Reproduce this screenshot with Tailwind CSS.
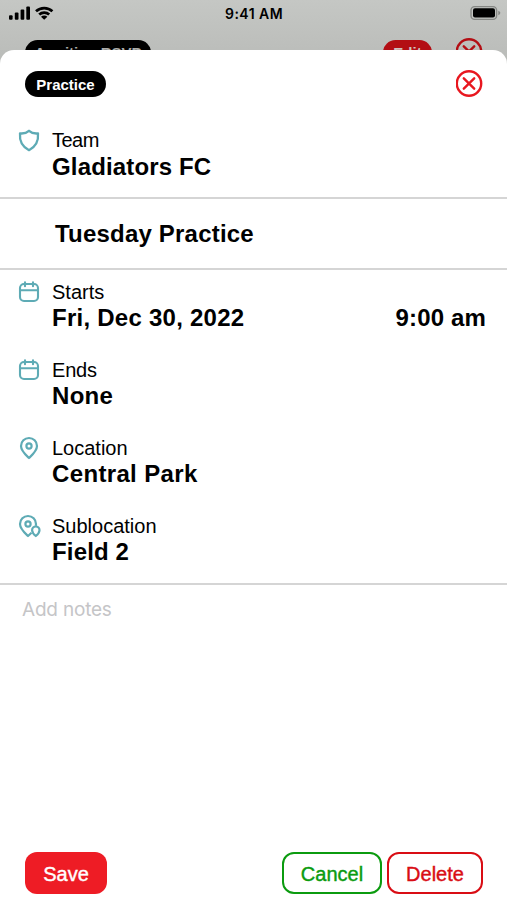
<!DOCTYPE html>
<html lang="en">
<head>
<meta charset="utf-8">
<meta name="viewport" content="width=device-width">
<title>Practice</title>
<script src="https://cdn.jsdelivr.net/npm/@tailwindcss/browser@4"></script>
</head>
<body class="font-['Liberation_Sans',Arial,sans-serif] text-black">
<div class="h-[900px] w-[507px] overflow-hidden bg-linear-to-b from-[#c5c7c4] from-0% to-[#b8bab7] to-[70px] flex flex-col">
  <header class="relative h-[50px] shrink-0 overflow-hidden">
    <div class="flex h-[28px] items-center justify-between pl-2 pr-[6px]">
      <svg class="w-[48px] h-[28px]" viewBox="8 0 48 28">
        <g><rect x="9" y="15.3" width="3.6" height="4.4" rx="1"/><rect x="14.8" y="12.4" width="3.7" height="7.3" rx="1"/><rect x="20.6" y="9.4" width="3.7" height="10.3" rx="1"/><rect x="26.3" y="6.5" width="3.7" height="13.2" rx="1"/></g>
        <g fill="none" stroke="#000" stroke-width="2.7"><path d="M36 11.3a12 12 0 0 1 16.4 0"/><path d="M39.2 14.6a7.3 7.3 0 0 1 10 0"/></g>
        <path d="M41 16.7a4.6 4.6 0 0 1 6.4 0L44.2 19.8z"/>
      </svg>
      <svg class="w-[32px] h-[28px]" viewBox="469 0 32 28">
        <rect x="471" y="6.6" width="25.6" height="12.8" rx="3.6" fill="none" stroke="#858784" stroke-width="1.4"/>
        <rect x="473" y="8.3" width="22" height="9.3" rx="2"/>
        <path d="M498.3 10.8v4.4c2.7-.9 2.7-3.5 0-4.4z" fill="#858784"/>
      </svg>
    </div>
    <div class="absolute left-[225px] top-[4px] text-[14px] leading-[20px] font-semibold tracking-[0.45px] whitespace-nowrap font-[Inter,sans-serif]">9:41 AM</div>
    <div class="flex items-start pl-[25px] pr-6 pt-[10px]">
      <div class="mt-[2px] h-[25px] w-[126px] shrink-0 rounded-full bg-black text-center text-[15px] leading-[25px] font-bold text-[#aaaba9] whitespace-nowrap">Awaiting RSVP</div>
      <div class="mt-[2px] ml-[232px] h-[25px] w-[49px] shrink-0 rounded-full bg-[#b30e14] text-center text-[15px] leading-[25px] font-bold text-[#cfc3c0]">Edit</div>
      <svg class="ml-[24px] size-7 shrink-0" viewBox="0 0 28 28" fill="none" stroke="#b30e14" stroke-width="2.4" stroke-linecap="round"><circle cx="13" cy="13.5" r="12.2"/><path d="M7.8 8.3l10.4 10.4m0-10.4L7.8 18.7"/></svg>
    </div>
  </header>
  <main class="flex flex-1 flex-col rounded-t-[14px] bg-white">
    <div class="flex h-[77px] shrink-0 items-start pl-[25px] pr-[23px] pt-[19px] justify-between">
      <div class="mt-[2px] h-[26px] w-[81px] rounded-full bg-black text-center text-[15px] leading-[27px] font-bold text-white">Practice</div>
      <svg class="size-7" viewBox="0 0 28 28" fill="none" stroke="#e8171f" stroke-width="2.4" stroke-linecap="round"><circle cx="13" cy="14.5" r="12.2"/><path d="M7.8 9.3l10.4 10.4m0-10.4L7.8 19.7"/></svg>
    </div>
    <section class="flex h-[71.5px] shrink-0 items-start border-b-2 border-[#d5d5d5] pl-[17px]">
      <svg class="mt-[2px] mr-[11px] size-6 shrink-0" viewBox="0 0 24 24" fill="none" stroke="#5eabb5" stroke-width="2.3" stroke-linejoin="round"><path d="M12 1.8C9.8 3.8 6.6 4.8 3 4.4C2.4 11 5 17.6 12 21.2C19 17.6 21.6 11 21 4.4C17.4 4.8 14.2 3.8 12 1.8z"/></svg>
      <div><div class="text-[20px] leading-[26px] tracking-[-0.5px]">Team</div><div class="text-[24px] leading-[28px] font-bold tracking-[0.15px]">Gladiators FC</div></div>
    </section>
    <section class="h-[71.5px] shrink-0 border-b-2 border-[#d5d5d5] pl-[55px] pt-[21px] text-[24px] leading-[28px] font-bold tracking-[0.2px]">Tuesday Practice</section>
    <section class="flex h-[315px] shrink-0 flex-col gap-[26px] border-b-2 border-[#d5d5d5] pl-[17px] pt-[9px]">
      <div class="flex items-start">
        <svg class="mt-px mr-[11px] size-6 shrink-0" viewBox="0 0 24 24" fill="none" stroke="#5eabb5" stroke-width="2.1" stroke-linecap="round"><rect x="3" y="4" width="18" height="17" rx="4"/><path d="M3 10.3h18M8 2.2v4M16 2.2v4"/></svg>
        <div><div class="text-[20px] leading-[26px]">Starts</div><div class="text-[24px] leading-[26px] font-bold tracking-[0.25px]">Fri, Dec 30, 2022</div></div>
        <div class="ml-auto mr-[21px] mt-[26px] text-[24px] leading-[26px] font-bold tracking-[0.15px]">9:00 am</div>
      </div>
      <div class="flex items-start">
        <svg class="mt-px mr-[11px] size-6 shrink-0" viewBox="0 0 24 24" fill="none" stroke="#5eabb5" stroke-width="2.1" stroke-linecap="round"><rect x="3" y="4" width="18" height="17" rx="4"/><path d="M3 10.3h18M8 2.2v4M16 2.2v4"/></svg>
        <div><div class="text-[20px] leading-[26px] tracking-[-0.2px]">Ends</div><div class="text-[24px] leading-[26px] font-bold tracking-[0.3px]">None</div></div>
      </div>
      <div class="flex items-start">
        <svg class="mt-px mr-[11px] size-6 shrink-0" viewBox="0 0 24 24" fill="none" stroke="#5eabb5" stroke-width="2.2" stroke-linejoin="round"><path d="M12 22C9 19.1 4 14.9 4 10a8 8 0 0 1 16 0C20 14.9 15 19.1 12 22z"/><circle cx="12" cy="10" r="2.6"/></svg>
        <div><div class="text-[20px] leading-[26px]">Location</div><div class="text-[24px] leading-[26px] font-bold tracking-[0.35px]">Central Park</div></div>
      </div>
      <div class="flex items-start">
        <svg class="mt-px mr-[11px] size-6 shrink-0" viewBox="0 0 24 24" fill="none" stroke="#5eabb5" stroke-width="2.2" stroke-linejoin="round"><path d="M14.5 18.8L11 22C8 19.1 3 14.9 3 10a8 8 0 0 1 16 0q0 1-.3 1.8"/><circle cx="11" cy="10" r="2.6"/><path d="M18.8 22c-2-1.7-3.7-3.6-3.7-5.8a3.7 3.7 0 0 1 7.4 0c0 2.2-1.7 4.1-3.7 5.8z"/></svg>
        <div><div class="text-[20px] leading-[26px]">Sublocation</div><div class="text-[24px] leading-[26px] font-bold tracking-[0.15px]">Field 2</div></div>
      </div>
    </section>
    <div class="flex-1 pl-[22px] pt-[12px] text-[19px] leading-[26px] tracking-[-0.2px] text-[#c5c5c7] font-[Inter,sans-serif]">Add notes</div>
    <footer class="mb-[6px] flex h-[42px] items-stretch pl-[25px] pr-6 text-[20px] leading-[40px] text-center">
      <button class="w-[82px] rounded-[12px] bg-[#ee1c25] pt-px text-white [-webkit-text-stroke:0.4px_#fff]">Save</button>
      <button class="ml-auto mr-[5px] w-[100px] rounded-[12px] border-[2.5px] border-[#0b9b0f] text-[#0b9b0f] [-webkit-text-stroke:0.4px_#0b9b0f]">Cancel</button>
      <button class="w-[96px] rounded-[12px] border-[2.5px] border-[#d90d14] text-[#d90d14] [-webkit-text-stroke:0.4px_#d90d14]">Delete</button>
    </footer>
  </main>
</div>
</body>
</html>
